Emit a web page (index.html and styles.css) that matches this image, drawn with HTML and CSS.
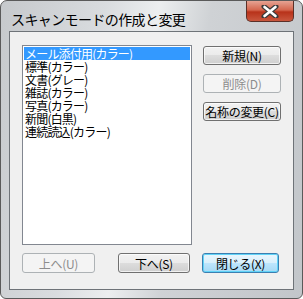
FILE: index.html
```html
<!DOCTYPE html>
<html lang="ja">
<head>
<meta charset="utf-8">
<link rel="stylesheet" href="styles.css">
</head>
<body>
<div class="window">
  <div class="titlebar">
    <span class="title">スキャンモードの作成と変更</span>
    <div class="close">
      <svg width="18" height="13" viewBox="0 0 18 13"><path d="M3 1.5 L15 11.5 M15 1.5 L3 11.5" stroke="#3a3a3a" stroke-width="5" stroke-linecap="round"/><path d="M3.5 2 L14.5 11 M14.5 2 L3.5 11" stroke="#fff" stroke-width="2.6" stroke-linecap="round"/></svg>
    </div>
  </div>
  <div class="client">
    <div class="top">
      <ul class="list">
        <li class="sel">メール添付用(カラー)</li>
        <li>標準(カラー)</li>
        <li>文書(グレー)</li>
        <li>雑誌(カラー)</li>
        <li>写真(カラー)</li>
        <li>新聞(白黒)</li>
        <li>連続読込(カラー)</li>
      </ul>
      <div class="side">
        <button class="btn">新規(N)</button>
        <button class="btn dis">削除(D)</button>
        <button class="btn">名称の変更(C)</button>
      </div>
    </div>
    <div class="bottom">
      <button class="btn dis b1">上へ(U)</button>
      <button class="btn b2">下へ(S)</button>
      <button class="btn def b3">閉じる(X)</button>
    </div>
  </div>
</div>
</body>
</html>
```
FILE: styles.css
```css
html, body { margin: 0; padding: 0; background: #fff; }
body { font-family: "Noto Sans CJK JP", sans-serif; font-size: 12px; }
.window {
  width: 303px; height: 299px; box-sizing: border-box;
  border: 1px solid #5a5a5a; border-radius: 7px 7px 6px 6px;
  background: linear-gradient(100deg, #c6c9cc 0%, #d9dcdf 30%, #eceeef 45%, #cfd2d5 60%, #c2c6ca 100%);
  display: flex; flex-direction: column;
}
.titlebar { height: 30px; display: flex; align-items: flex-start; }
.title { margin: 9px 0 0 10px; font-size: 14px; color: #000; letter-spacing: -0.6px; line-height: 18px; }
.close {
  margin-left: auto; margin-right: 8px; width: 48px; height: 21px; box-sizing: border-box;
  border: 1px solid #5a3028; border-top: none; border-radius: 0 0 5px 5px;
  background: linear-gradient(#e6a393 0%, #d4664e 45%, #b8321a 55%, #c9573e 100%);
  display: flex; align-items: center; justify-content: center;
}
.client {
  margin: 0 8px 8px 8px; flex: 1; background: #f0f0f0;
  border: 1px solid #6e7378; padding: 13px 12px 0 12px; box-sizing: border-box;
  display: flex; flex-direction: column;
}
.top { display: flex; gap: 11px; }
.list {
  margin: 0; padding: 1px 1px; list-style: none; width: 170px; height: 200px; box-sizing: border-box;
  background: #fff; border: 1px solid #828790;
}
.list li { height: 13px; line-height: 13px; padding-left: 1px; white-space: nowrap; color: #000; letter-spacing: -0.8px; }
.list li.sel { background: #3399ff; color: #fff; }
.side { display: flex; flex-direction: column; gap: 9px; padding-top: 1px; }
.btn {
  font-family: "Noto Sans CJK JP", sans-serif; font-size: 12px; color: #000;
  width: 78px; height: 19px; padding: 0; line-height: 15px; box-sizing: border-box;
  border: 1px solid #707070; border-radius: 3px;
  background: linear-gradient(#f2f2f2 0%, #ebebeb 49%, #dddddd 50%, #cfcfcf 100%);
  box-shadow: inset 0 0 0 1px rgba(255,255,255,0.7);
  letter-spacing: -0.3px;
}
.btn.dis { color: #8d8d8d; border-color: #adb2b5; background: #f4f4f4; box-shadow: none; }
.bottom { display: flex; margin-top: 8px; }
.bottom .btn { height: 20px; }
.b1 { width: 73px; }
.b2 { width: 72px; margin-left: 23px; }
.b3 { width: 77px; margin-left: 12px; }
.btn.def {
  border-color: #3c7fb1;
  background: linear-gradient(#eaf6fd 0%, #d9f0fc 49%, #bee6fd 50%, #a7d9f5 100%);
  box-shadow: inset 0 0 0 1px #61d3f7;
}
```
